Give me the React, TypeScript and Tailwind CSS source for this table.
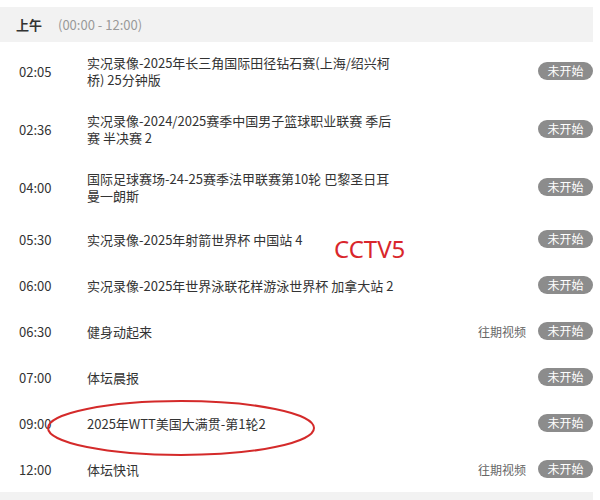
const rows = [
  { time: "02:05", title: "实况录像-2025年长三角国际田径钻石赛(上海/绍兴柯桥) 25分钟版" },
  { time: "02:36", title: "实况录像-2024/2025赛季中国男子篮球职业联赛 季后赛 半决赛 2" },
  { time: "04:00", title: "国际足球赛场-24-25赛季法甲联赛第10轮 巴黎圣日耳曼一朗斯" },
  { time: "05:30", title: "实况录像-2025年射箭世界杯 中国站 4" },
  { time: "06:00", title: "实况录像-2025年世界泳联花样游泳世界杯 加拿大站 2" },
  { time: "06:30", title: "健身动起来", past: true },
  { time: "07:00", title: "体坛晨报" },
  { time: "09:00", title: "2025年WTT美国大满贯-第1轮2" },
  { time: "12:00", title: "体坛快讯", past: true },
];

const ScheduleRow = ({ time, title, past }: { time: string; title: string; past?: boolean }) => (
  <div className="flex items-center min-h-[46px] py-3 text-[13px] leading-[17px] text-[#333]">
    <div className="w-[87px] shrink-0 pl-[19px]">{time}</div>
    <div className="w-[310px] shrink-0">{title}</div>
    <div className="flex-1 flex items-center justify-end gap-[12px]">
      {past && <span className="text-[12px] text-[#666]">往期视频</span>}
      <span className="w-[55px] h-[18px] rounded-full bg-[#8c8c8c] text-white text-[12px] leading-[18px] text-center">
        未开始
      </span>
    </div>
  </div>
);

export default function App() {
  return (
    <div
      className="relative w-[600px] h-[500px] overflow-hidden bg-white pt-[7px]"
      style={{ fontFamily: '"Noto Sans CJK SC", "Noto Sans", sans-serif' }}
    >
      <div className="w-[593px]">
        <div className="h-[35px] bg-[#f2f2f2] flex items-center pl-[16px] text-[13px]">
          <span className="font-bold text-[#333]">上午</span>
          <span className="ml-[16px] text-[#999]">(00:00 - 12:00)</span>
        </div>
        {rows.map((r) => (
          <ScheduleRow key={r.time} {...r} />
        ))}
        <div className="h-[35px] bg-[#f2f2f2]" />
      </div>

      {/* annotations drawn over the screenshot */}
      <div
        className="absolute left-[334px] top-[237px] text-[24px] leading-none text-[#d9262b]"
        style={{ fontFamily: '"Noto Sans", sans-serif' }}
      >
        CCTV5
      </div>
      <svg className="absolute left-0 top-0 pointer-events-none" width="600" height="500">
        <ellipse cx="181" cy="428" rx="133" ry="27" fill="none" stroke="#d42a2a" strokeWidth="2" />
      </svg>
    </div>
  );
}
